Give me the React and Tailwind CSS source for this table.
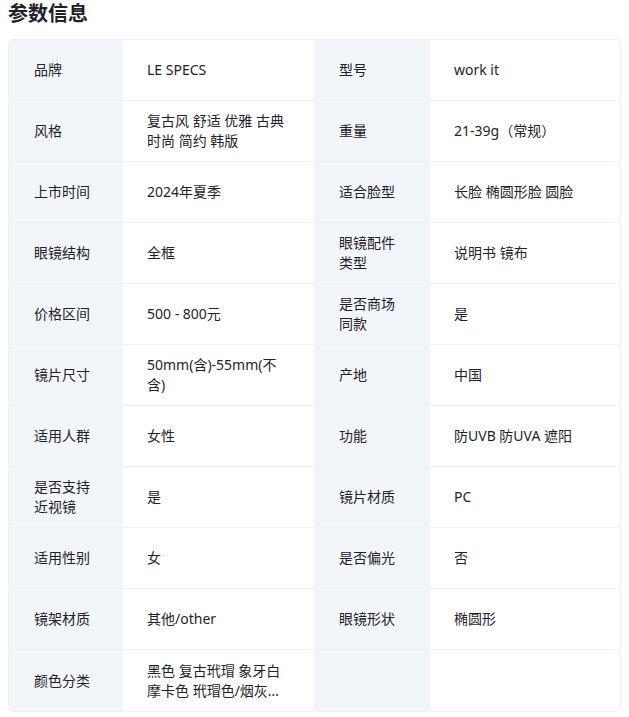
// App.jsx — 参数信息 table
const rows = [
  ['品牌', 'LE SPECS', '型号', 'work it'],
  ['风格', '复古风 舒适 优雅 古典 时尚 简约 韩版', '重量', '21-39g（常规）'],
  ['上市时间', '2024年夏季', '适合脸型', '长脸 椭圆形脸 圆脸'],
  ['眼镜结构', '全框', '眼镜配件类型', '说明书 镜布'],
  ['价格区间', '500 - 800元', '是否商场同款', '是'],
  ['镜片尺寸', '50mm(含)-55mm(不含)', '产地', '中国'],
  ['适用人群', '女性', '功能', '防UVB 防UVA 遮阳'],
  ['是否支持近视镜', '是', '镜片材质', 'PC'],
  ['适用性别', '女', '是否偏光', '否'],
  ['镜架材质', '其他/other', '眼镜形状', '椭圆形'],
  ['颜色分类', '黑色 复古玳瑁 象牙白 摩卡色 玳瑁色/烟灰色 透明色', '', ''],
];

function Label({ children }) {
  return (
    <div className="bg-[#f2f5f9] pl-[25px] pr-[24px] flex items-center text-[14px] leading-[20px] text-[#1f2329]">
      {children}
    </div>
  );
}

function Value({ children }) {
  return (
    <div className="bg-white pl-[24px] pr-[24px] flex items-center text-[14px] leading-[20px] text-[#1f2329]">
      <span className="line-clamp-2">{children}</span>
    </div>
  );
}

export default function App() {
  return (
    <div
      className="w-[629px] bg-white px-2 pb-2"
      style={{ fontFamily: '"Noto Sans", "Noto Sans CJK SC", sans-serif' }}
    >
      <h2 className="text-[20px] leading-[28px] font-bold text-[#1f2329]">参数信息</h2>

      <div className="mt-[11px] border border-[#eef0f3] rounded-md overflow-hidden">
        {rows.map((r, i) => (
          <div
            key={i}
            className={`grid grid-cols-[114px_191px_116px_190px] h-[61px] ${i < rows.length - 1 ? 'border-b border-[#eef1f5]' : ''}`}
          >
            <Label>{r[0]}</Label>
            <Value>{r[1]}</Value>
            <Label>{r[2]}</Label>
            <Value>{r[3]}</Value>
          </div>
        ))}
      </div>
    </div>
  );
}
